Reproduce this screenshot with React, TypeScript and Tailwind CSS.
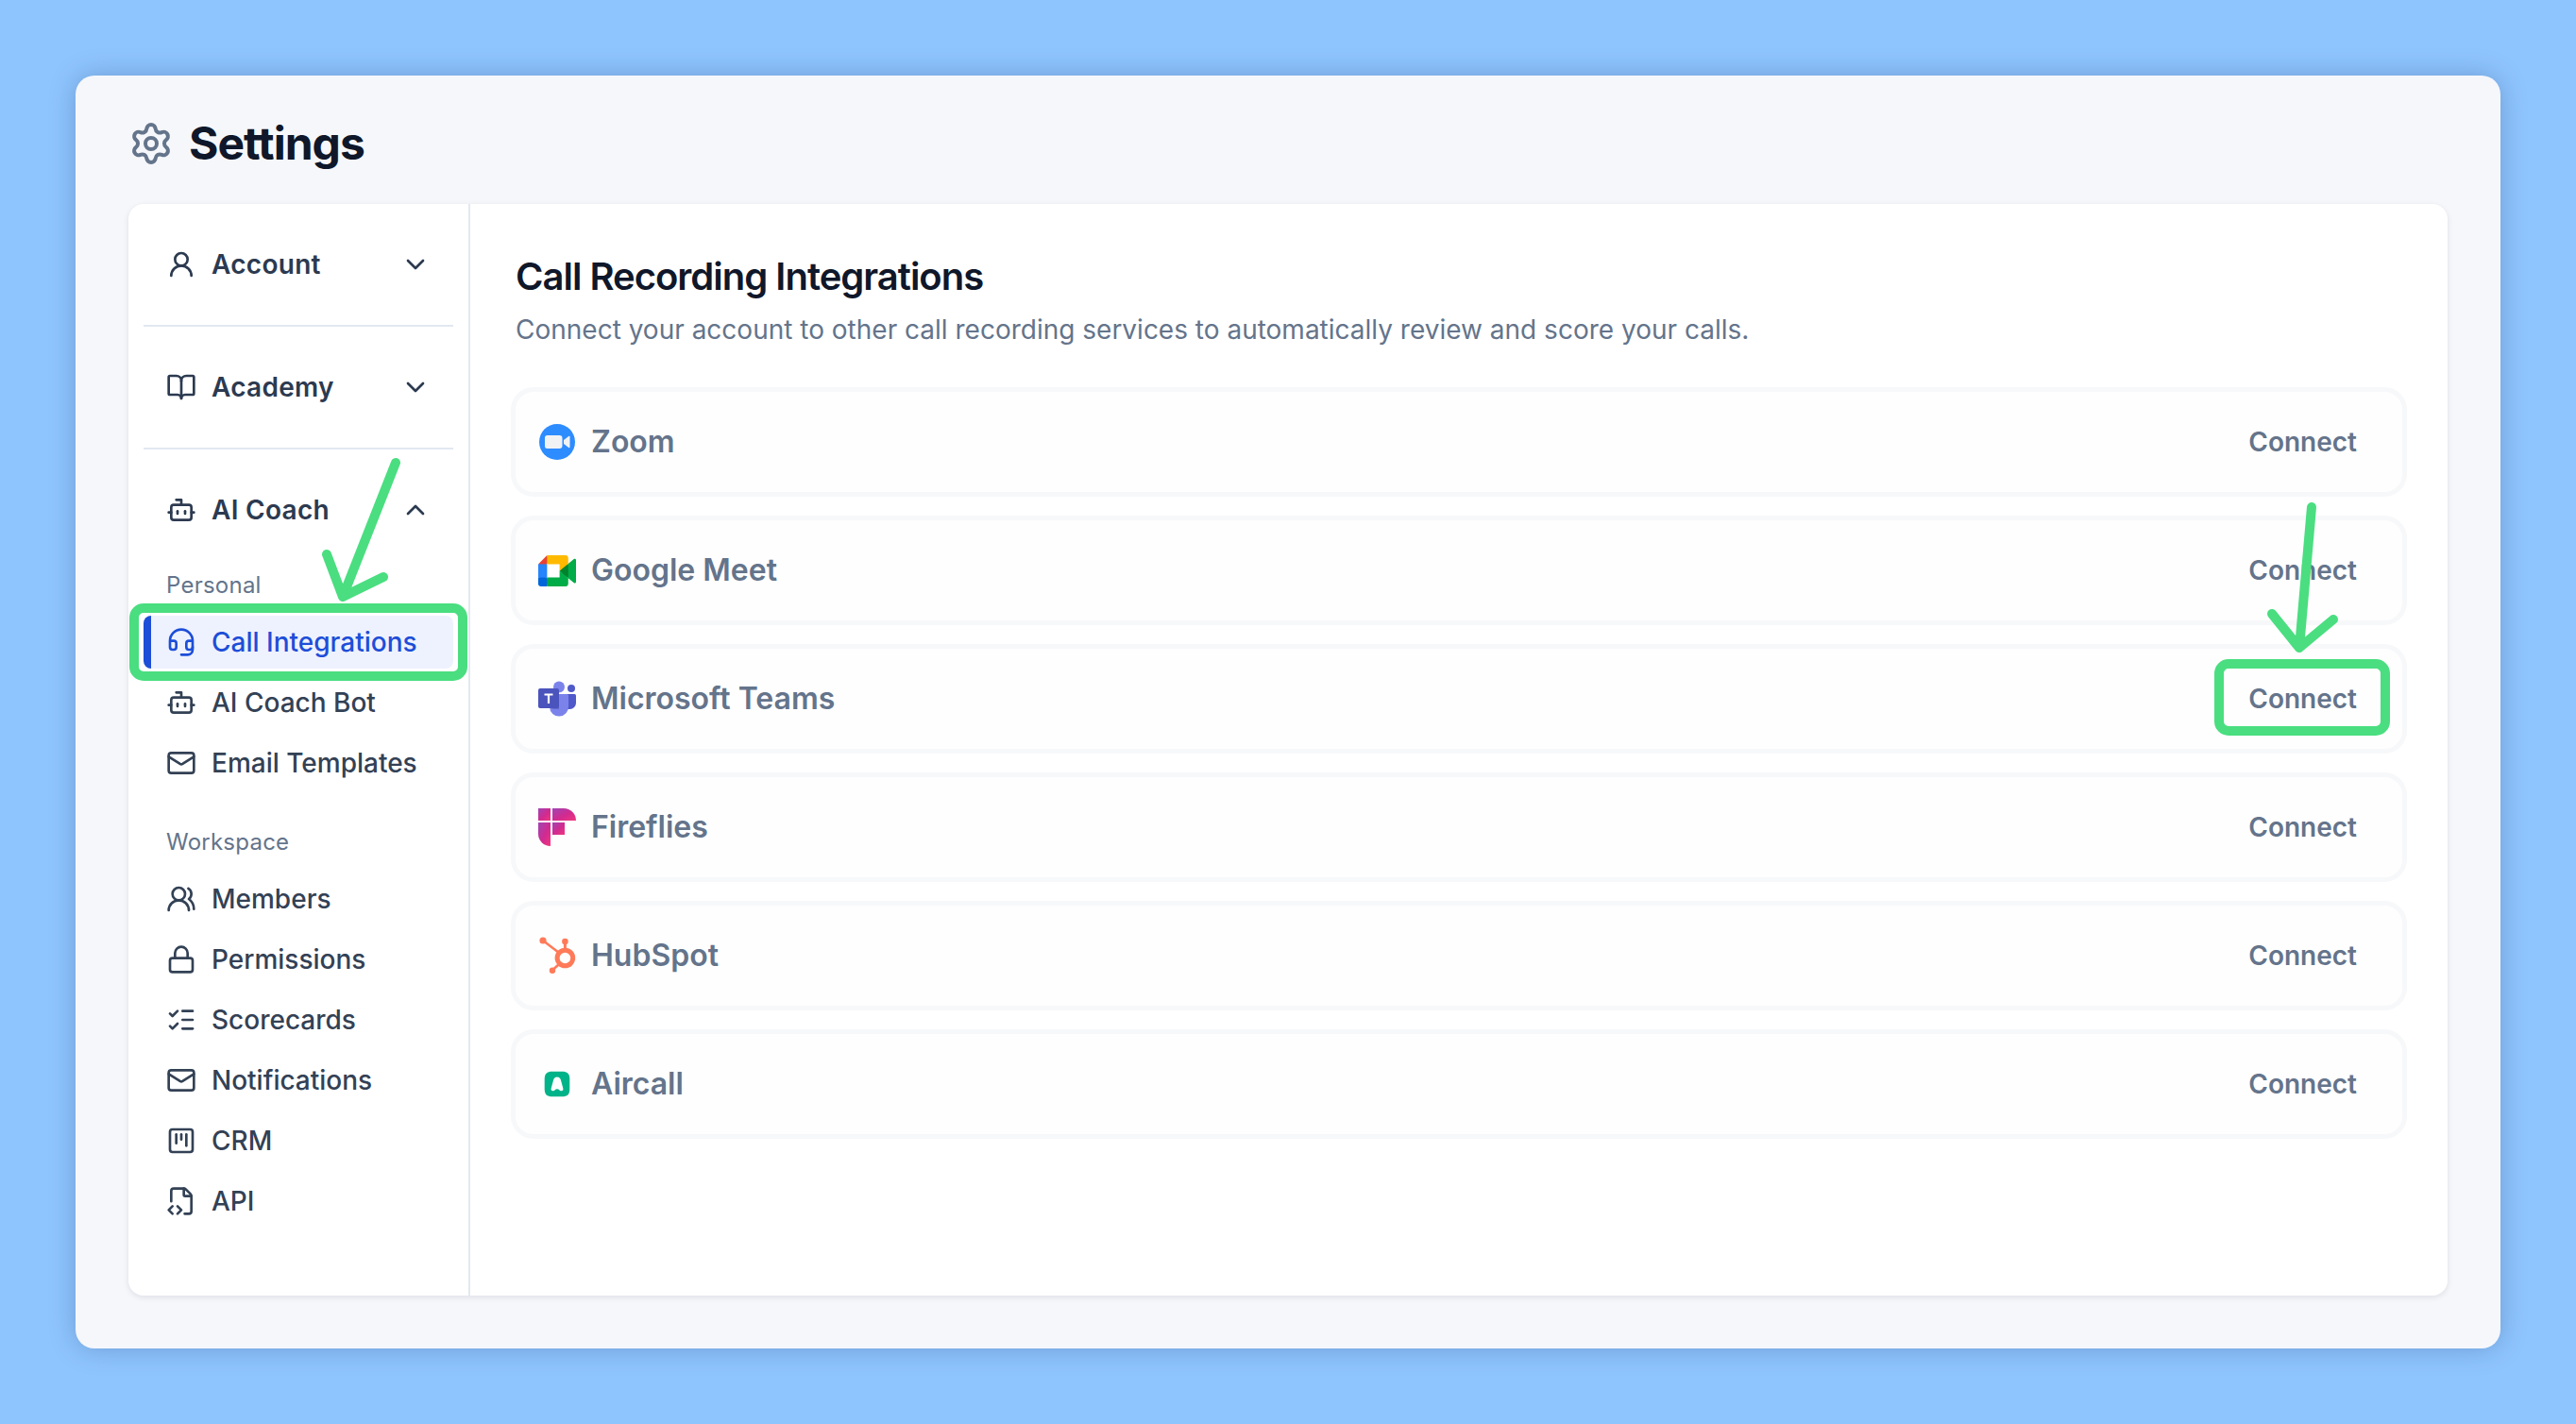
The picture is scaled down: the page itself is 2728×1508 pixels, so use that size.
import React from "react";
import {
  Settings,
  UserRound,
  BookOpen,
  Bot,
  ChevronDown,
  ChevronUp,
  Headset,
  Mail,
  UsersRound,
  Lock,
  ListChecks,
  SquareKanban,
  FileCode2,
} from "lucide-react";

const ZoomLogo = () => (
  <svg viewBox="0 0 40 40" className="w-10 h-10">
    <circle cx="20" cy="20" r="19" fill="#2d8cff" />
    <path d="M7 15.5a2.5 2.5 0 0 1 2.5-2.5h13a3 3 0 0 1 3 3v8a3 3 0 0 1-3 3h-13a2.5 2.5 0 0 1-2.5-2.5z" fill="#f1f2f4" />
    <path d="M27 18l5.2-4.1c.6-.4 1.3-.2 1.3.6v11c0 .8-.7 1-1.3.6L27 22z" fill="#f1f2f4" />
  </svg>
);

const MeetLogo = () => (
  <svg viewBox="0 0 87.5 72" className="w-10 h-[33px]">
    <path fill="#00832d" d="M49.5 36l8.53 9.75 11.47 7.33 2-17.02-2-16.64-11.69 6.44z" />
    <path fill="#0066da" d="M0 51.5V66c0 3.315 2.685 6 6 6h14.5l3-10.96-3-9.54-9.95-3z" />
    <path fill="#e94235" d="M20.5 0L0 20.5l10.55 3 9.95-3 2.95-9.41z" />
    <path fill="#2684fc" d="M20.5 20.5H0v31h20.5z" />
    <path fill="#00ac47" d="M82.6 8.68L69.5 19.42v33.66l13.16 10.79c1.97 1.54 4.85.135 4.85-2.37V11c0-2.535-2.945-3.925-4.91-2.32zM49.5 36v15.5h-29V72h43c3.315 0 6-2.685 6-6V53.08z" />
    <path fill="#ffba00" d="M63.5 0h-43v20.5h29V36l20-16.57V6c0-3.315-2.685-6-6-6z" />
  </svg>
);

const TeamsLogo = () => (
  <svg viewBox="0 0 40 40" className="w-10 h-10">
    <circle cx="35" cy="9" r="4" fill="#5059c9" />
    <path d="M27 15h11.5a1.5 1.5 0 0 1 1.5 1.5v8a6.5 6.5 0 0 1-6.5 6.5H27z" fill="#5059c9" />
    <circle cx="22" cy="7.5" r="6" fill="#7b83eb" />
    <path d="M11 15h19.5a1.5 1.5 0 0 1 1.5 1.5V28a10 10 0 0 1-20 1z" fill="#7b83eb" />
    <path d="M12 13h8a2 2 0 0 1 2 2v16H16a6 6 0 0 1-4-5z" fill="#4a50b5" opacity="0.5" />
    <rect x="0" y="9" width="22" height="21" rx="2" fill="#4b53bc" />
    <path d="M6.5 14.5h9v2h-3.4V25h-2.2v-8.5H6.5z" fill="#fff" />
  </svg>
);

const FirefliesLogo = () => (
  <svg viewBox="0 0 40 40" className="w-10 h-10">
    <defs>
      <linearGradient id="ff" x1="0" y1="0" x2="1" y2="1">
        <stop offset="0" stopColor="#9f45b4" />
        <stop offset="0.55" stopColor="#d22a8f" />
        <stop offset="1" stopColor="#f0377f" />
      </linearGradient>
    </defs>
    <g fill="url(#ff)">
      <rect x="0" y="0" width="13" height="13" />
      <path d="M15 0h12a13 13 0 0 1 13 13H15z" />
      <path d="M0 15h13v25A13 13 0 0 1 0 27z" />
      <rect x="15" y="15" width="13" height="13" />
    </g>
  </svg>
);

const HubSpotLogo = () => (
  <svg viewBox="0 0 40 40" className="w-10 h-10">
    <g stroke="#ff7a59" fill="none" strokeWidth="2.4">
      <path d="M5 4L22 17" strokeWidth="2.6" />
      <path d="M28.4 5v9" strokeWidth="3" />
      <path d="M15 35.5L22 29" strokeWidth="2.6" />
      <circle cx="28.4" cy="22.5" r="8.3" strokeWidth="5" />
    </g>
    <circle cx="5" cy="4" r="3.6" fill="#ff7a59" />
    <circle cx="28.4" cy="5" r="3.3" fill="#ff7a59" />
    <circle cx="15" cy="35.7" r="3.2" fill="#ff7a59" />
  </svg>
);

const AircallLogo = () => (
  <svg viewBox="0 0 40 40" className="w-10 h-10">
    <path d="M15 6.7h10c6 0 8.3 2.3 8.3 8.3v10c0 6-2.3 8.3-8.3 8.3H15c-6 0-8.3-2.3-8.3-8.3V15c0-6 2.3-8.3 8.3-8.3z" fill="#00b388" />
    <path d="M20 12.5c2.2 0 3.5 1.4 4 3.5l2.3 8.5c.4 1.7-.3 2.8-1.8 2.8-1.1 0-1.6-.4-2.2-1.1-.5-.6-1.3-1-2.3-1s-1.8.4-2.3 1c-.6.7-1.1 1.1-2.2 1.1-1.5 0-2.2-1.1-1.8-2.8L16 16c.5-2.1 1.8-3.5 4-3.5z" fill="#fff" />
  </svg>
);

const integrations = [
  { name: "Zoom", logo: <ZoomLogo /> },
  { name: "Google Meet", logo: <MeetLogo /> },
  { name: "Microsoft Teams", logo: <TeamsLogo /> },
  { name: "Fireflies", logo: <FirefliesLogo /> },
  { name: "HubSpot", logo: <HubSpotLogo /> },
  { name: "Aircall", logo: <AircallLogo /> },
];

function SectionHeader({ icon: Icon, label, open }: { icon: any; label: string; open?: boolean }) {
  const Chevron = open ? ChevronUp : ChevronDown;
  return (
    <button className="flex h-14 w-full items-center justify-between px-6 text-[#2c3a50]">
      <span className="flex items-center gap-4">
        <Icon size={32} strokeWidth={2} />
        <span className="text-[28px] font-semibold leading-10 tracking-[0.01em]">{label}</span>
      </span>
      <Chevron size={32} strokeWidth={2} />
    </button>
  );
}

function NavItem({ icon: Icon, label, active }: { icon: any; label: string; active?: boolean }) {
  return (
    <a
      className={
        active
          ? "flex h-14 items-center gap-4 rounded-lg bg-[linear-gradient(to_right,#1d4ed8_8px,#eef2fe_8px)] px-6 text-[#1d4ed8]"
          : "flex h-14 items-center gap-4 px-6 text-[#334155]"
      }
    >
      <Icon size={32} strokeWidth={2} />
      <span className="text-[28px] font-medium leading-10">{label}</span>
    </a>
  );
}

function Label({ text }: { text: string }) {
  return <div className="mb-3 h-10 px-6 text-[24px] leading-10 tracking-[0.01em] text-[#64748b]">{text}</div>;
}

export default function App() {
  return (
    <div className="relative h-[1508px] w-[2728px] overflow-hidden bg-[#8fc5ff] p-20 font-['Inter',sans-serif]">
      <div className="h-[1348px] rounded-[20px] bg-[#f6f7fb] px-14 pt-12 shadow-[0_0_28px_rgba(20,50,90,0.28)]">
        <header className="mb-10 flex h-12 items-center gap-4">
          <Settings size={48} strokeWidth={2} className="text-[#64748b]" />
          <h1 className="text-[48px] font-bold leading-[48px] tracking-[-0.02em] text-[#0f172a]">Settings</h1>
        </header>

        <div className="flex h-[1156px] rounded-2xl bg-white shadow-[0_2px_6px_rgba(15,23,42,0.1)]">
          <aside className="w-[362px] shrink-0 border-r-2 border-[#e2e8f0] px-4">
            <section className="border-b-2 border-[#e2e8f0] py-9">
              <SectionHeader icon={UserRound} label="Account" />
            </section>
            <section className="border-b-2 border-[#e2e8f0] py-9">
              <SectionHeader icon={BookOpen} label="Academy" />
            </section>
            <section className="pt-9">
              <SectionHeader icon={Bot} label="AI Coach" open />
              <div className="mt-8">
                <Label text="Personal" />
                <nav className="flex flex-col gap-2">
                  <NavItem icon={Headset} label="Call Integrations" active />
                  <NavItem icon={Bot} label="AI Coach Bot" />
                  <NavItem icon={Mail} label="Email Templates" />
                </nav>
              </div>
              <div className="mt-9">
                <Label text="Workspace" />
                <nav className="flex flex-col gap-2">
                  <NavItem icon={UsersRound} label="Members" />
                  <NavItem icon={Lock} label="Permissions" />
                  <NavItem icon={ListChecks} label="Scorecards" />
                  <NavItem icon={Mail} label="Notifications" />
                  <NavItem icon={SquareKanban} label="CRM" />
                  <NavItem icon={FileCode2} label="API" />
                </nav>
              </div>
            </section>
          </aside>

          <main className="flex-1 pl-[43px] pr-[43px] pt-[53px]">
            <div className="pl-[5px]">
              <h2 className="text-[40px] font-semibold leading-[48px] tracking-[-0.025em] text-[#0f172a]">
                Call Recording Integrations
              </h2>
              <p className="mt-3 text-[28px] leading-10 text-[#64748b]">
                Connect your account to other call recording services to automatically review and score your calls.
              </p>
            </div>
            <ul className="mt-[41px] flex flex-col gap-[20px]">
              {integrations.map((it) => (
                <li
                  key={it.name}
                  className="flex h-[116px] items-center justify-between rounded-3xl border-[5px] border-[#f7f8fa] bg-[#fefefe] pl-[24px] pr-[18px]"
                >
                  <span className="flex items-center gap-4">
                    <span className="flex h-10 w-10 items-center justify-center">{it.logo}</span>
                    <span className="text-[32px] font-semibold leading-10 text-[#64748b]">{it.name}</span>
                  </span>
                  <button className="h-[72px] rounded-lg px-[30px] text-[28px] font-semibold text-[#64748b]">
                    Connect
                  </button>
                </li>
              ))}
            </ul>
          </main>
        </div>
      </div>

      <svg
        viewBox="0 0 2728 1508"
        className="pointer-events-none absolute inset-0 h-full w-full"
        fill="none"
        stroke="#4ade80"
        strokeWidth="10"
        strokeLinecap="round"
        strokeLinejoin="round"
      >
        <rect x="142" y="644" width="348" height="72" rx="10" />
        <rect x="2350" y="703" width="176" height="71" rx="10" />
        <path d="M419 490L363 632M346 587L363 632L406 611" />
        <path d="M2448 537L2435 686M2406 650L2435 686L2471 656" />
      </svg>
    </div>
  );
}
